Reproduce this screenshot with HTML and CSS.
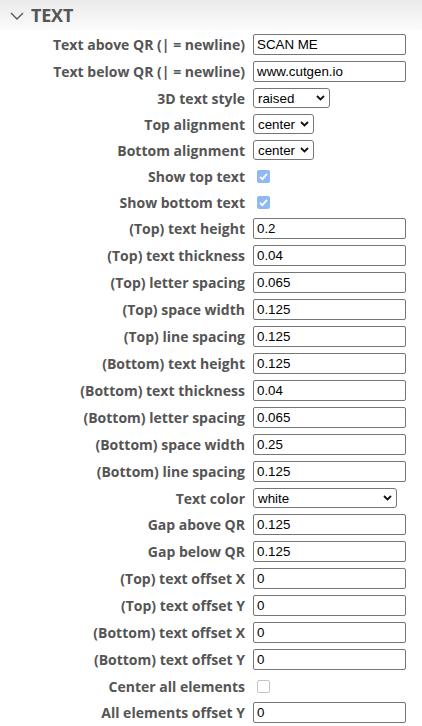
FILE: index.html
```html
<!DOCTYPE html>
<html>
<head>
<meta charset="utf-8">
<link rel="stylesheet" href="styles.css">
</head>
<body>
<div class="panel">
  <div class="header">
    <svg class="chev" width="14" height="8" viewBox="0 0 14 8"><path d="M1 1 L7 7 L13 1" fill="none" stroke="#555" stroke-width="1.3"/></svg>
    <span class="title">TEXT</span>
  </div>
  <div class="rows">
    <div class="row r27"><label class="lbl">Text above QR (| = newline)</label><input class="txt" type="text" value="SCAN ME"></div>
    <div class="row r27"><label class="lbl">Text below QR (| = newline)</label><input class="txt" type="text" value="www.cutgen.io"></div>
    <div class="row r26"><label class="lbl">3D text style</label><span class="selwrap w76"><select class="sel"><option>raised</option></select><svg class="arrow" width="9" height="6" viewBox="0 0 9 6"><path d="M1 1 L4.5 4.5 L8 1" fill="none" stroke="#111" stroke-width="1.8"/></svg></span></div>
    <div class="row r26"><label class="lbl">Top alignment</label><span class="selwrap w60"><select class="sel"><option>center</option></select><svg class="arrow" width="9" height="6" viewBox="0 0 9 6"><path d="M1 1 L4.5 4.5 L8 1" fill="none" stroke="#111" stroke-width="1.8"/></svg></span></div>
    <div class="row r26"><label class="lbl">Bottom alignment</label><span class="selwrap w60"><select class="sel"><option>center</option></select><svg class="arrow" width="9" height="6" viewBox="0 0 9 6"><path d="M1 1 L4.5 4.5 L8 1" fill="none" stroke="#111" stroke-width="1.8"/></svg></span></div>
    <div class="row r26"><label class="lbl">Show top text</label><span class="chk on"><svg width="13" height="13" viewBox="0 0 13 13"><path d="M3 6.8 L5.4 9.2 L10 3.8" fill="none" stroke="#fff" stroke-width="1.8"/></svg></span></div>
    <div class="row r26"><label class="lbl">Show bottom text</label><span class="chk on"><svg width="13" height="13" viewBox="0 0 13 13"><path d="M3 6.8 L5.4 9.2 L10 3.8" fill="none" stroke="#fff" stroke-width="1.8"/></svg></span></div>
    <div class="row r27"><label class="lbl">(Top) text height</label><input class="txt" type="text" value="0.2"></div>
    <div class="row r27"><label class="lbl">(Top) text thickness</label><input class="txt" type="text" value="0.04"></div>
    <div class="row r27"><label class="lbl">(Top) letter spacing</label><input class="txt" type="text" value="0.065"></div>
    <div class="row r27"><label class="lbl">(Top) space width</label><input class="txt" type="text" value="0.125"></div>
    <div class="row r27"><label class="lbl">(Top) line spacing</label><input class="txt" type="text" value="0.125"></div>
    <div class="row r27"><label class="lbl">(Bottom) text height</label><input class="txt" type="text" value="0.125"></div>
    <div class="row r27"><label class="lbl">(Bottom) text thickness</label><input class="txt" type="text" value="0.04"></div>
    <div class="row r27"><label class="lbl">(Bottom) letter spacing</label><input class="txt" type="text" value="0.065"></div>
    <div class="row r27"><label class="lbl">(Bottom) space width</label><input class="txt" type="text" value="0.25"></div>
    <div class="row r27"><label class="lbl">(Bottom) line spacing</label><input class="txt" type="text" value="0.125"></div>
    <div class="row r26"><label class="lbl">Text color</label><span class="selwrap w143"><select class="sel"><option>white</option></select><svg class="arrow" width="9" height="6" viewBox="0 0 9 6"><path d="M1 1 L4.5 4.5 L8 1" fill="none" stroke="#111" stroke-width="1.8"/></svg></span></div>
    <div class="row r27"><label class="lbl">Gap above QR</label><input class="txt" type="text" value="0.125"></div>
    <div class="row r27"><label class="lbl">Gap below QR</label><input class="txt" type="text" value="0.125"></div>
    <div class="row r27"><label class="lbl">(Top) text offset X</label><input class="txt" type="text" value="0"></div>
    <div class="row r27"><label class="lbl">(Top) text offset Y</label><input class="txt" type="text" value="0"></div>
    <div class="row r27"><label class="lbl">(Bottom) text offset X</label><input class="txt" type="text" value="0"></div>
    <div class="row r27"><label class="lbl">(Bottom) text offset Y</label><input class="txt" type="text" value="0"></div>
    <div class="row r26"><label class="lbl">Center all elements</label><span class="chk off"></span></div>
    <div class="row r27"><label class="lbl">All elements offset Y</label><input class="txt" type="text" value="0"></div>
  </div>
</div>
</body>
</html>
```
FILE: styles.css
```css
html, body {
  margin: 0;
  padding: 0;
  background: #fff;
}
body {
  font-family: "Open Sans", "Liberation Sans", sans-serif;
  width: 422px;
  height: 726px;
  overflow: hidden;
}
.header {
  height: 30px;
  background: linear-gradient(to bottom, #ebebeb, #fbfbfb);
  display: flex;
  align-items: center;
  padding-left: 10px;
  gap: 7px;
  box-sizing: border-box;
}
.chev {
  display: block;
  margin-top: 2px;
}
.title {
  font-weight: 700;
  font-size: 18px;
  color: #555;
  letter-spacing: -0.2px;
}
.rows {
  padding-top: 1px;
  display: flex;
  flex-direction: column;
}
.row {
  display: flex;
  align-items: center;
  gap: 8px;
}
.r27 { height: 27px; }
.r26 { height: 26px; }
.lbl {
  width: 245px;
  text-align: right;
  font-weight: 700;
  font-size: 14px;
  color: #555;
  white-space: nowrap;
}
.txt {
  box-sizing: border-box;
  width: 153px;
  height: 21px;
  margin: 0;
  padding: 1px 3px;
  border: 1px solid #767676;
  border-radius: 2px;
  font-family: "Liberation Sans", Arial, sans-serif;
  font-size: 13.33px;
  color: #000;
  background: #fff;
  outline: none;
}
.selwrap {
  position: relative;
  display: block;
  height: 20px;
}
.sel {
  -webkit-appearance: none;
  appearance: none;
  box-sizing: border-box;
  display: block;
  width: 100%;
  height: 20px;
  margin: 0;
  padding: 0 0 0 4px;
  border: 1px solid #767676;
  border-radius: 3px;
  font-family: "Liberation Sans", Arial, sans-serif;
  font-size: 13.33px;
  color: #000;
  background: #fff;
}
.arrow {
  position: absolute;
  right: 5px;
  top: 7px;
  pointer-events: none;
}
.w76 { width: 77px; }
.w60 { width: 61px; }
.w143 { width: 144px; }
.chk {
  box-sizing: border-box;
  display: block;
  width: 13px;
  height: 13px;
  margin-left: 4px;
  border-radius: 2px;
}
.chk svg { display: block; }
.chk.on {
  background: #8fb8f4;
}
.chk.off {
  border: 1px solid #c4c4c4;
  background: #fff;
}
```
